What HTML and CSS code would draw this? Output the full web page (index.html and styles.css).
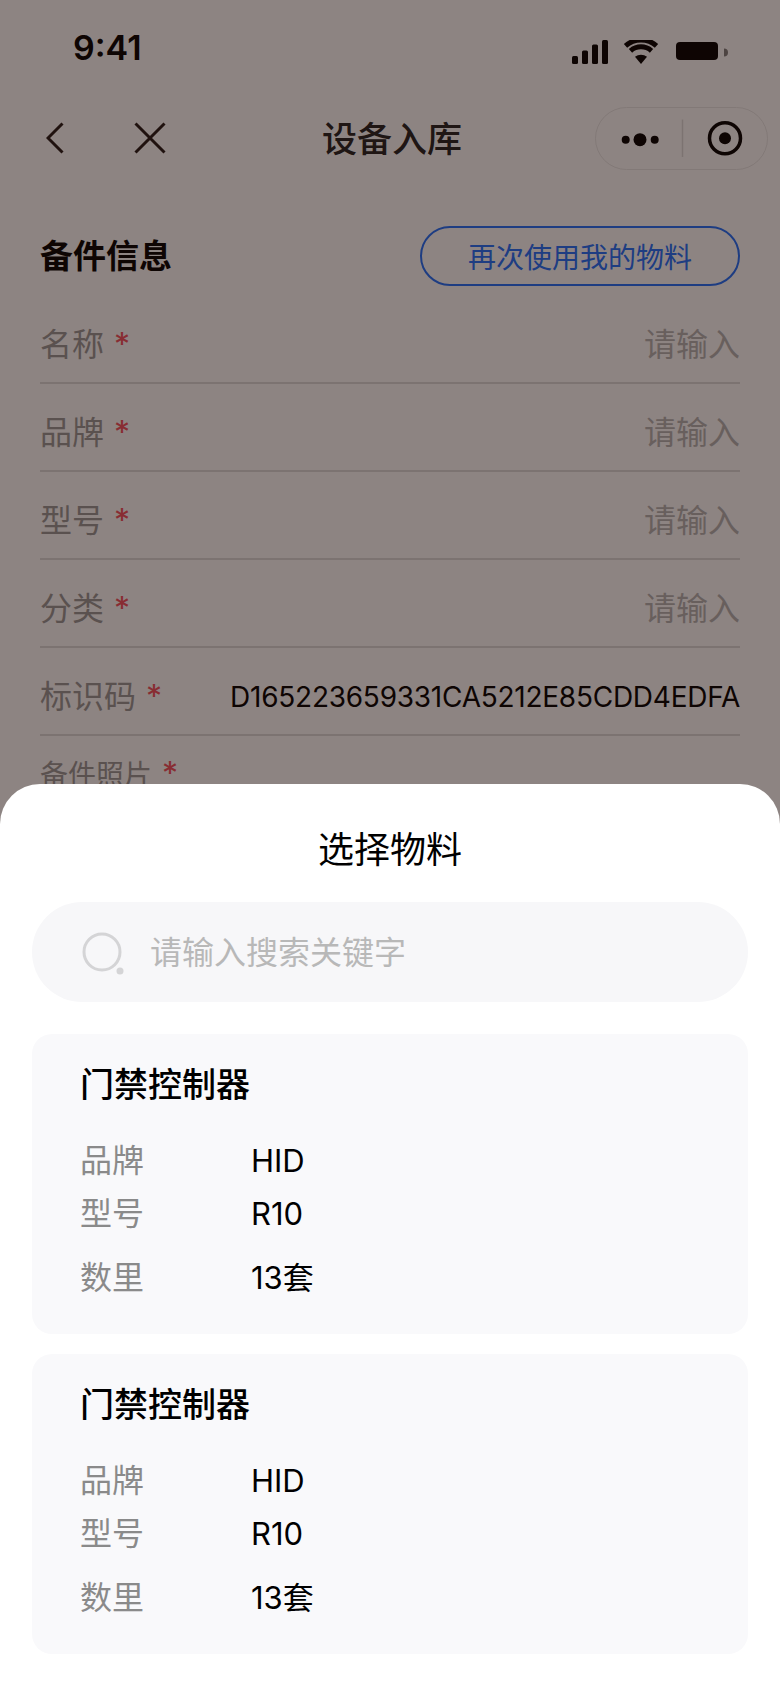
FILE: index.html
```html
<!DOCTYPE html>
<html lang="zh-CN">
<head>
<meta charset="utf-8">
<title>设备入库</title>
<link rel="stylesheet" href="styles.css">
</head>
<body>
<div class="page">
  <header class="status">
    <span class="time">9:41</span>
    <svg class="status-icons" width="156" height="24" viewBox="572 40 156 24">
      <g class="ink">
        <rect x="572" y="56" width="6" height="8" rx="1.5"/>
        <rect x="582" y="50.5" width="6" height="13.5" rx="1.5"/>
        <rect x="592" y="44.5" width="6" height="19.5" rx="1.5"/>
        <rect x="602" y="40" width="6" height="24" rx="1.5"/>
        <path d="M641 64l-6-7.2a9.500 9.500 0 0 1 12 0z"/>
        <rect x="676" y="42" width="42" height="18" rx="4"/>
        <path d="M724 48.500a4 4 0 0 1 0 8z" opacity=".5"/>
      </g>
      <g class="wifi-arcs">
        <path d="M630.500 50.800a16 16 0 0 1 21 0"/>
        <path d="M625.500 45.800a23.500 23.500 0 0 1 31 0"/>
      </g>
    </svg>
  </header>

  <nav class="nav">
    <div class="nav-left">
      <svg class="nav-icon" width="18" height="32" viewBox="0 0 18 32"><path d="M16.500 1.500L2 16l14.500 14.500"/></svg>
      <svg class="nav-icon" width="32" height="32" viewBox="0 0 32 32"><path d="M1.500 1.500l29 29M30.500 1.500l-29 29"/></svg>
    </div>
    <h1 class="nav-title">设备入库</h1>
    <div class="nav-right">
      <div class="capsule">
        <svg width="173" height="63" viewBox="595 106 173 63">
          <g class="ink">
            <circle cx="625.700" cy="138.700" r="4"/>
            <circle cx="640" cy="138.700" r="6.500"/>
            <circle cx="654.700" cy="138.700" r="4"/>
            <circle cx="725" cy="137.300" r="6"/>
          </g>
          <circle class="ring" cx="725" cy="137.300" r="15.500"/>
          <path class="capsule-line" d="M682.500 118.500v37.500"/>
        </svg>
      </div>
    </div>
  </nav>

  <section class="section-head">
    <h2 class="section-title">备件信息</h2>
    <button class="reuse">再次使用我的物料</button>
  </section>

  <div class="form">
    <div class="row"><span class="label">名称<i class="req">*</i></span><span class="hint">请输入</span></div>
    <div class="row"><span class="label">品牌<i class="req">*</i></span><span class="hint">请输入</span></div>
    <div class="row"><span class="label">型号<i class="req">*</i></span><span class="hint">请输入</span></div>
    <div class="row"><span class="label">分类<i class="req">*</i></span><span class="hint">请输入</span></div>
    <div class="row"><span class="label">标识码<i class="req">*</i></span><span class="code">D165223659331CA5212E85CDD4EDFA</span></div>
    <div class="photo-label">备件照片<i class="req">*</i></div>
  </div>

  <div class="mask"></div>

  <aside class="sheet">
    <h3 class="sheet-title">选择物料</h3>
    <div class="search">
      <svg class="search-icon" width="48" height="50" viewBox="0 0 48 50">
        <circle cx="20" cy="20" r="18" fill="none" stroke="#d4d4d6" stroke-width="3"/>
        <circle cx="38" cy="39" r="3.500" fill="#d4d4d6"/>
      </svg>
      <span class="search-hint">请输入搜索关键字</span>
    </div>
    <article class="card">
      <h4 class="card-title">门禁控制器</h4>
      <dl class="spec">
        <dt>品牌</dt><dd>HID</dd>
        <dt>型号</dt><dd>R10</dd>
        <dt class="spec-qty">数里</dt><dd class="spec-qty">13套</dd>
      </dl>
    </article>
    <article class="card">
      <h4 class="card-title">门禁控制器</h4>
      <dl class="spec">
        <dt>品牌</dt><dd>HID</dd>
        <dt>型号</dt><dd>R10</dd>
        <dt class="spec-qty">数里</dt><dd class="spec-qty">13套</dd>
      </dl>
    </article>
  </aside>
</div>
</body>
</html>
```
FILE: styles.css
```css
* { box-sizing: border-box; }
html, body { margin: 0; padding: 0; }
body {
  font-family: "Inter", "Noto Sans CJK SC", sans-serif;
  background: #fff;
  color: #000;
}
h1, h2, h3, h4, dl, dd { margin: 0; }
i { font-style: normal; }

.page {
  position: relative;
  width: 780px;
  height: 1688px;
  overflow: hidden;
  background: #fff;
}

.status {
  height: 96px;
  padding: 0 52px 0 73px;
  display: flex;
  align-items: center;
  justify-content: space-between;
}
.time { font-size: 34px; font-weight: 600; line-height: 40px; }
.status-icons { margin-top: 8px; }
.ink { fill: #000; }
.wifi-arcs { fill: none; stroke: #000; stroke-width: 5; }

.nav {
  height: 64px;
  margin-top: 10px;
  padding: 0 12px;
  display: grid;
  grid-template-columns: 1fr auto 1fr;
  align-items: center;
}
.nav-left { display: flex; align-items: center; gap: 70px; padding-left: 34px; }
.nav-icon { fill: none; stroke: #241a18; stroke-width: 3; }
.nav-title { font-size: 35px; font-weight: 500; line-height: 44px; color: #222; margin: 2px 0 0 4px; }
.nav-right { display: flex; justify-content: flex-end; }
.capsule {
  width: 173px;
  height: 63px;
  border: 1px solid #e8e8e8;
  border-radius: 32px;
  display: flex;
}
.capsule svg { margin: -1px; flex: none; }
.ring { fill: none; stroke: #000; stroke-width: 3.500; }
.capsule-line { stroke: #dcdcdc; stroke-width: 1.500; }

.section-head {
  height: 60px;
  margin-top: 56px;
  padding: 0 40px;
  display: flex;
  align-items: center;
  justify-content: space-between;
}
.section-title { font-size: 33px; font-weight: 700; line-height: 44px; }
.reuse {
  width: 320px;
  height: 60px;
  border: 2px solid #2070ff;
  border-radius: 30px;
  background: #fff;
  color: #2070ff;
  font: inherit;
  font-size: 28px;
  padding: 0;
}

.form { margin-top: 10px; padding: 0 40px; }
.row {
  height: 88px;
  padding-top: 12px;
  border-bottom: 2px solid #dcdcdc;
  display: flex;
  align-items: center;
  justify-content: space-between;
}
.label { font-size: 32px; line-height: 40px; color: #999; white-space: nowrap; }
.req { color: #f5505f; margin-left: 10px; font-size: 32px; }
.hint { font-size: 32px; line-height: 40px; color: #b5b5b5; }
.code { font-size: 28px; line-height: 40px; color: #000; letter-spacing: -.25px; white-space: nowrap; }
.photo-label { margin-top: 18px; font-size: 28px; line-height: 40px; color: #999; }

.mask {
  position: absolute;
  inset: 0;
  background: rgba(28, 9, 6, .5);
}

.sheet {
  position: absolute;
  left: 0;
  right: 0;
  top: 784px;
  bottom: 0;
  padding: 42px 32px 0;
  background: #fff;
  border-radius: 40px 40px 0 0;
}
.sheet-title { font-size: 36px; font-weight: 400; line-height: 48px; text-align: center; color: #000; }
.search {
  height: 100px;
  margin-top: 28px;
  padding-left: 50px;
  border-radius: 50px;
  background: #f7f7f9;
  display: flex;
  align-items: center;
  gap: 22px;
}
.search-icon { flex: none; margin-top: 9px; margin-right: -2px; }
.search-hint { font-size: 32px; line-height: 40px; color: #b8b8b8; margin-top: 2px; }

.card {
  height: 300px;
  margin-top: 20px;
  padding: 30px 48px 0;
  border-radius: 20px;
  background: #f9f9fb;
}
.search + .card { margin-top: 32px; }
.card-title { font-size: 34px; font-weight: 500; line-height: 42px; color: #000; }
.spec {
  margin-top: 35px;
  display: grid;
  grid-template-columns: 171px 1fr;
  row-gap: 13px;
  font-size: 31px;
  line-height: 40px;
}
.spec dt { color: #8a8a8a; font-size: 32px; }
.spec dd { color: #000; }
.spec .spec-qty { margin-top: 11px; }
```
